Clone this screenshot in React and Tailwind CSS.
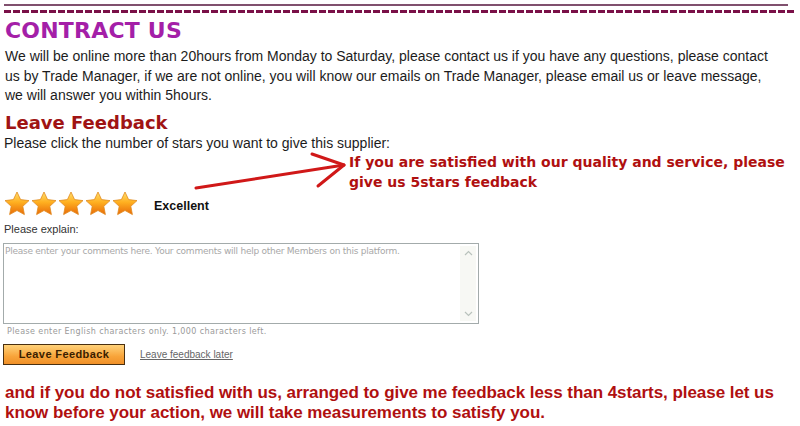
import React from 'react';

// ── Small drawings ─────────────────────────────────────────────────────
const Star = ({ id }) => (
    <svg width="26" height="25" viewBox="0 0 26 25">
        <defs>
            <linearGradient id={id} x1="0" y1="0" x2="0" y2="1">
                <stop offset="0" stopColor="#ffe070" />
                <stop offset="0.45" stopColor="#ffb020" />
                <stop offset="1" stopColor="#e86a08" />
            </linearGradient>
        </defs>
        <path
            d="M13 1 L16.6 8.6 L25 9.6 L18.8 15.3 L20.4 23.6 L13 19.5 L5.6 23.6 L7.2 15.3 L1 9.6 L9.4 8.6 Z"
            fill={`url(#${id})`}
            stroke="#e08a20"
            strokeWidth="0.8"
            strokeLinejoin="round"
        />
    </svg>
);

const Arrow = () => (
    <svg width="156" height="42" viewBox="0 0 156 42" className="shrink-0">
        <path d="M2 36 L150 13" stroke="#d01818" strokeWidth="3" strokeLinecap="round" fill="none" />
        <path d="M118 2 L150 13 L124 34" stroke="#d01818" strokeWidth="3" strokeLinecap="round" strokeLinejoin="round" fill="none" />
    </svg>
);

const Chevron = ({ up }) => (
    <svg width="9" height="6" viewBox="0 0 9 6">
        <path d={up ? 'M1 5 L4.5 1.5 L8 5' : 'M1 1 L4.5 4.5 L8 1'} stroke="#b9c2bc" strokeWidth="1.2" fill="none" />
    </svg>
);

const intro = [
    'We will be online more than 20hours from Monday to Saturday, please contact us if you have any questions, please contact',
    'us by Trade Manager, if we are not online, you will know our emails on Trade Manager, please email us or leave message,',
    'we will answer you within 5hours.',
];

const App = () => {
    return (
        <div className="w-[800px] h-[426px] bg-white overflow-hidden relative">

            {/* ── Top rules ── */}
            <div className="pt-[4px] pl-[4px]">
                <div className="w-[784px] h-[2px] bg-[#80506e]" />
                <div className="w-[790px] h-[3px] mt-[4px] bg-[repeating-linear-gradient(90deg,#7a1048_0px,#7a1048_7px,transparent_7px,transparent_9px)]" />
            </div>

            {/* ── Contract us ── */}
            <h1 className="pl-[5px] mt-[5px] h-[26px] leading-[26px] text-[22px] font-bold text-[#a41fa8] tracking-[0.2px] font-['DejaVu_Sans',sans-serif]">
                CONTRACT US
            </h1>
            <div className="pl-[5px] mt-[3px] text-[14px] leading-[19.5px] text-[#1c1c1c] font-['Liberation_Sans',Arial,sans-serif]">
                {intro.map((line) => (
                    <div key={line} className="whitespace-nowrap">{line}</div>
                ))}
            </div>

            {/* ── Leave feedback ── */}
            <h2 className="pl-[5px] mt-[6px] h-[22px] leading-[22px] text-[18px] font-bold text-[#a01414] font-['DejaVu_Sans',sans-serif]">
                Leave Feedback
            </h2>
            <div className="pl-[4px] text-[14px] leading-[18px] text-[#1c1c1c] font-['Liberation_Sans',Arial,sans-serif]">
                Please click the number of stars you want to give this supplier:
            </div>

            <div className="flex items-start h-[38px]">
                <div className="w-[194px] shrink-0" />
                <div className="mt-[0px]"><Arrow /></div>
                <div className="text-[14px] leading-[20px] font-bold text-[#b01010] whitespace-nowrap font-['DejaVu_Sans',sans-serif] -ml-[1px]">
                    <div>If you are satisfied with our quality and service, please</div>
                    <div>give us 5stars feedback</div>
                </div>
            </div>

            <div className="flex items-center pl-[4px] mt-[1px] h-[26px]">
                <div className="flex gap-[1px]">
                    {[0, 1, 2, 3, 4].map((i) => <Star key={i} id={`star-grad-${i}`} />)}
                </div>
                <span className="ml-[16px] mt-[6px] text-[12.5px] font-bold text-[#111] font-['Liberation_Sans',Arial,sans-serif]">Excellent</span>
            </div>

            {/* ── Comment box ── */}
            <div className="pl-[4px] mt-[5px] text-[11px] leading-[14px] text-[#333] font-['Liberation_Sans',Arial,sans-serif]">Please explain:</div>
            <div className="ml-[3px] mt-[7px] w-[476px] h-[81px] border border-[#a3abab] flex bg-white">
                <div className="flex-1 pl-[1px] pt-[1px] text-[9px] leading-[12px] text-[#a8a8a8] font-['DejaVu_Sans',sans-serif] tracking-[-0.25px]">
                    Please enter your comments here. Your comments will help other Members on this platform.
                </div>
                <div className="w-[16px] my-[2px] mr-[2px] bg-[#f7f8f4] flex flex-col justify-between items-center py-[4px]">
                    <Chevron up />
                    <Chevron />
                </div>
            </div>
            <div className="pl-[7px] mt-[2px] text-[8px] leading-[12px] text-[#9a9a9a] tracking-[0.4px] font-['DejaVu_Sans',sans-serif]">
                Please enter English characters only. 1,000 characters left.
            </div>

            {/* ── Actions ── */}
            <div className="flex items-center pl-[3px] mt-[6px]">
                <button className="w-[122px] h-[21px] border border-[#4a3010] bg-[linear-gradient(#ffd27a,#f8a43a_60%,#f09028)] text-[11px] font-bold text-[#3a2000] tracking-[0.4px] font-['Liberation_Sans',Arial,sans-serif]">
                    Leave Feedback
                </button>
                <a className="ml-[15px] text-[10px] text-[#666] underline font-['Liberation_Sans',Arial,sans-serif]">Leave feedback later</a>
            </div>

            {/* ── Closing note ── */}
            <div className="pl-[5px] mt-[18px] text-[17px] leading-[20px] font-bold text-[#b01010] whitespace-nowrap tracking-[-0.05px] font-['Liberation_Sans',Arial,sans-serif]">
                <div>and if you do not satisfied with us, arranged to give me feedback less than 4starts, please let us</div>
                <div>know before your action, we will take measurements to satisfy you.</div>
            </div>
        </div>
    );
};

export default App;
